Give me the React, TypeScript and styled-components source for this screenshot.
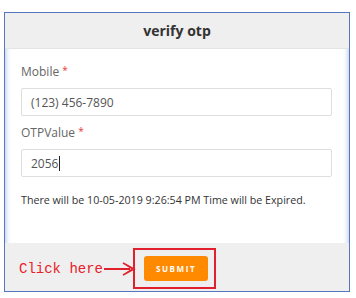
import React from 'react'
import styled, { createGlobalStyle } from 'styled-components'

const GlobalStyle = createGlobalStyle`
  body {
    margin: 0;
    background: #ffffff;
    font-family: "Open Sans", "Liberation Sans", sans-serif;
  }
`

const Page = styled.div`
  padding: 12px 6px 0 4px;
`

const Card = styled.div`
  width: 346px;
  height: 280px;
  box-sizing: border-box;
  border: 1px solid #5676bd;
  box-shadow: inset 0 0 5px 1px rgba(120, 150, 215, 0.55);
  background: #ffffff;
  display: flex;
  flex-direction: column;
`

const Header = styled.div`
  height: 35px;
  flex-shrink: 0;
  background: #efefef;
  border-bottom: 1px solid #e4e4e4;
  display: flex;
  align-items: center;
  justify-content: center;
  font-size: 14px;
  font-weight: 700;
  color: #333333;
`

const Body = styled.div`
  flex: 1;
  padding: 15px 17px 0 16px;
  display: flex;
  flex-direction: column;
`

const Label = styled.label`
  display: block;
  height: 16px;
  font-size: 12px;
  color: #666666;
  line-height: 16px;
  margin-bottom: 8px;
`

const Required = styled.span`
  color: #e53935;
  font-size: 10px;
  line-height: 0;
  margin-left: 3px;
  vertical-align: 2px;
`

const Input = styled.div`
  height: 28px;
  box-sizing: border-box;
  border: 1px solid #dedede;
  border-radius: 2px;
  padding: 0 9px;
  display: flex;
  align-items: center;
  font-size: 12px;
  color: #555555;
  margin-bottom: 9px;
`

const Caret = styled.span`
  display: inline-block;
  width: 1px;
  height: 15px;
  background: #222222;
  margin-left: 1px;
`

const Note = styled.p`
  margin: 7px 0 0;
  font-size: 10.7px;
  color: #333333;
`

const Footer = styled.div`
  height: 48px;
  flex-shrink: 0;
  background: #efefef;
  display: flex;
  align-items: center;
  padding-left: 14px;
`

const Hint = styled.span`
  font-family: "Liberation Mono", "DejaVu Sans Mono", monospace;
  font-size: 14px;
  color: #e8202a;
  margin-top: 4px;
`

const Arrow = styled.svg`
  width: 32px;
  height: 16px;
  margin-left: 1px;
  margin-top: 3px;
`

const Highlight = styled.div`
  width: 83px;
  height: 41px;
  box-sizing: border-box;
  border: 2px solid #e0202c;
  display: flex;
  align-items: center;
  justify-content: center;
  margin-left: -3px;
  margin-top: 2px;
`

const SubmitButton = styled.button`
  width: 64px;
  height: 25px;
  border: none;
  border-radius: 3px;
  background: #ff8a00;
  color: #ffffff;
  font-family: "Open Sans", "Liberation Sans", sans-serif;
  font-size: 8px;
  font-weight: 700;
  letter-spacing: 1.6px;
  padding: 0;
  margin-left: 3px;
`

export default function App() {
  return (
    <Page>
      <GlobalStyle />
      <Card>
        <Header>verify otp</Header>
        <Body>
          <Label>
            Mobile<Required>*</Required>
          </Label>
          <Input>(123) 456-7890</Input>
          <Label>
            OTPValue<Required>*</Required>
          </Label>
          <Input>
            2056
            <Caret />
          </Input>
          <Note>There will be 10-05-2019 9:26:54 PM Time will be Expired.</Note>
        </Body>
        <Footer>
          <Hint>Click here</Hint>
          <Arrow viewBox="0 0 32 16">
            <path d="M0 8 H26" stroke="#e0202c" strokeWidth="2" fill="none" />
            <path d="M19 2 L30 8 L19 14" stroke="#e0202c" strokeWidth="1.6" fill="none" />
            <path d="M22 4 L28 8 L22 12" stroke="#e0202c" strokeWidth="1" fill="none" />
          </Arrow>
          <Highlight>
            <SubmitButton>SUBMIT</SubmitButton>
          </Highlight>
        </Footer>
      </Card>
    </Page>
  )
}
